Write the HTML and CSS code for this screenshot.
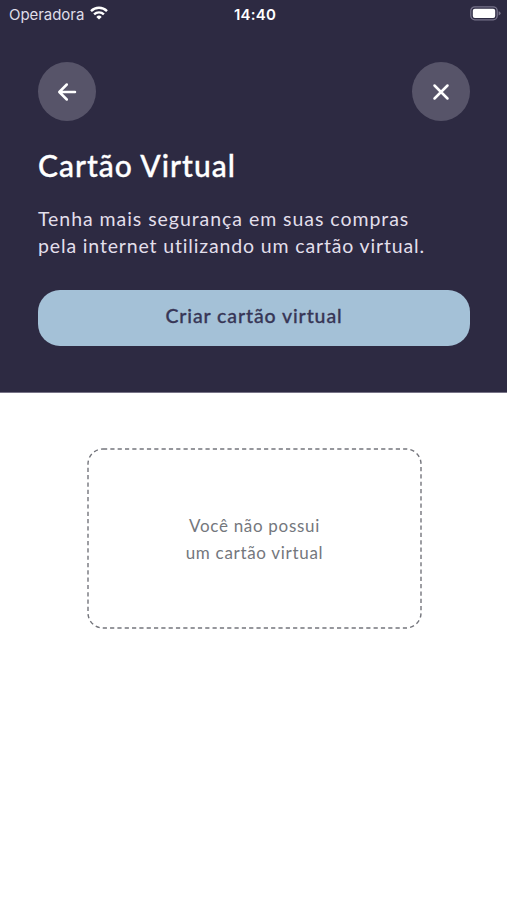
FILE: index.html
```html
<!DOCTYPE html>
<html lang="pt-BR">
<head>
<meta charset="utf-8">
<meta name="viewport" content="width=device-width, initial-scale=1">
<title>Cartão Virtual</title>
<link rel="stylesheet" href="styles.css">
</head>
<body>
<header class="hero">
  <div class="status">
    <div class="carrier"><span class="carrier-name">Operadora</span>
      <svg width="18" height="14" viewBox="0 0 18 14" fill="none" stroke="#fff" stroke-width="2.4"><path d="M1 5.1a11.4 11.4 0 0 1 16 0M4.1 8.4a7 7 0 0 1 9.8 0"/><path d="M9 13.6 6.3 10.9a3.9 3.9 0 0 1 5.4 0z" fill="#fff" stroke="none"/></svg>
    </div>
    <span class="clock">14:40</span>
    <svg class="battery" width="31" height="15" viewBox="0 0 31 15"><rect x=".8" y=".8" width="26.4" height="13" rx="4" fill="none" stroke="#77738a" stroke-width="1.3"/><rect x="2.8" y="2.7" width="22.4" height="9.2" rx="2" fill="#fff"/><path d="M28.6 5.2q2 .7 2 2.1t-2 2.1z" fill="#77738a"/></svg>
  </div>
  <nav class="nav">
    <button class="round" aria-label="Voltar"><svg width="20" height="20" viewBox="0 0 20 20"><path d="M18 10H2.5M9.8 2.5 2.3 10l7.5 7.5"/></svg></button>
    <button class="round" aria-label="Fechar"><svg width="20" height="20" viewBox="0 0 20 20"><path d="m3.5 3.5 13 13m0-13-13 13"/></svg></button>
  </nav>
  <h1 class="title">Cartão Virtual</h1>
  <p class="intro"><span class="intro-first">Tenha mais segurança em suas compras</span><br><span class="intro-second">pela internet utilizando um cartão virtual.</span></p>
  <button class="create">Criar cartão virtual</button>
</header>
<main class="content">
  <section class="empty">
    <svg class="outline" width="335" height="181" viewBox="0 0 335 181"><rect x="1" y="1" width="333" height="179" rx="15"/></svg>
    <p class="message"><span class="message-first">Você não possui</span><br><span class="message-second">um cartão virtual</span></p>
  </section>
</main>
</body>
</html>
```
FILE: styles.css
```css
* { box-sizing: border-box; }
body { margin: 0; min-height: 900px; background: #fff; font-family: Lato, sans-serif; }
button { border: 0; font: inherit; padding: 0; }
.hero { height: 393px; background: #2d2a42; color: #fff; border-bottom: 1px solid #777387; }
.status { height: 28px; padding: 0 6px 0 9px; display: grid; grid-template-columns: 1fr auto 1fr; align-items: center; font-family: Inter, sans-serif; font-size: 15px; }
.carrier { display: flex; align-items: center; gap: 6px; color: #dfdde8; }
.carrier-name { letter-spacing: -0.05px; }
.carrier svg { margin-top: -2px; }
.clock { font-weight: 600; letter-spacing: .2px; }
.battery { justify-self: end; margin-top: -1px; }
.nav { display: flex; justify-content: space-between; padding: 34px 37px 0 38px; }
.round { width: 58px; height: 59px; border-radius: 50%; background: #575469; display: grid; place-items: center; }
.round svg { fill: none; stroke: #fff; stroke-width: 2.5; stroke-linecap: round; stroke-linejoin: round; }
.title { margin: 25px 38px 0; font-size: 30px; line-height: 38px; font-weight: 500; letter-spacing: 1px; -webkit-text-stroke: .35px; }
.intro { margin: 21px 38px 0; font-size: 19.5px; line-height: 27px; color: #e2dfeb; white-space: nowrap; }
.intro-first { letter-spacing: .95px; }
.intro-second { letter-spacing: .85px; }
.create { display: block; width: 432px; height: 56px; margin: 31px 0 0 38px; padding-bottom: 6px; border-radius: 22px; background: #a4c1d7; color: #373656; font-size: 19.5px; font-weight: 500; letter-spacing: .9px; -webkit-text-stroke: .3px; }
.content { padding: 55px 0 0 87px; }
.empty { width: 335px; display: grid; place-items: center; }
.outline, .message { grid-area: 1 / 1; }
.outline { fill: none; stroke: #74757c; stroke-width: 1.4; stroke-dasharray: 4.2 3.12; }
.message { margin: 0; padding-top: 0; text-align: center; font-size: 17px; line-height: 27px; color: #74777d; }
.message-first { letter-spacing: .7px; }
.message-second { letter-spacing: .7px; }
```
